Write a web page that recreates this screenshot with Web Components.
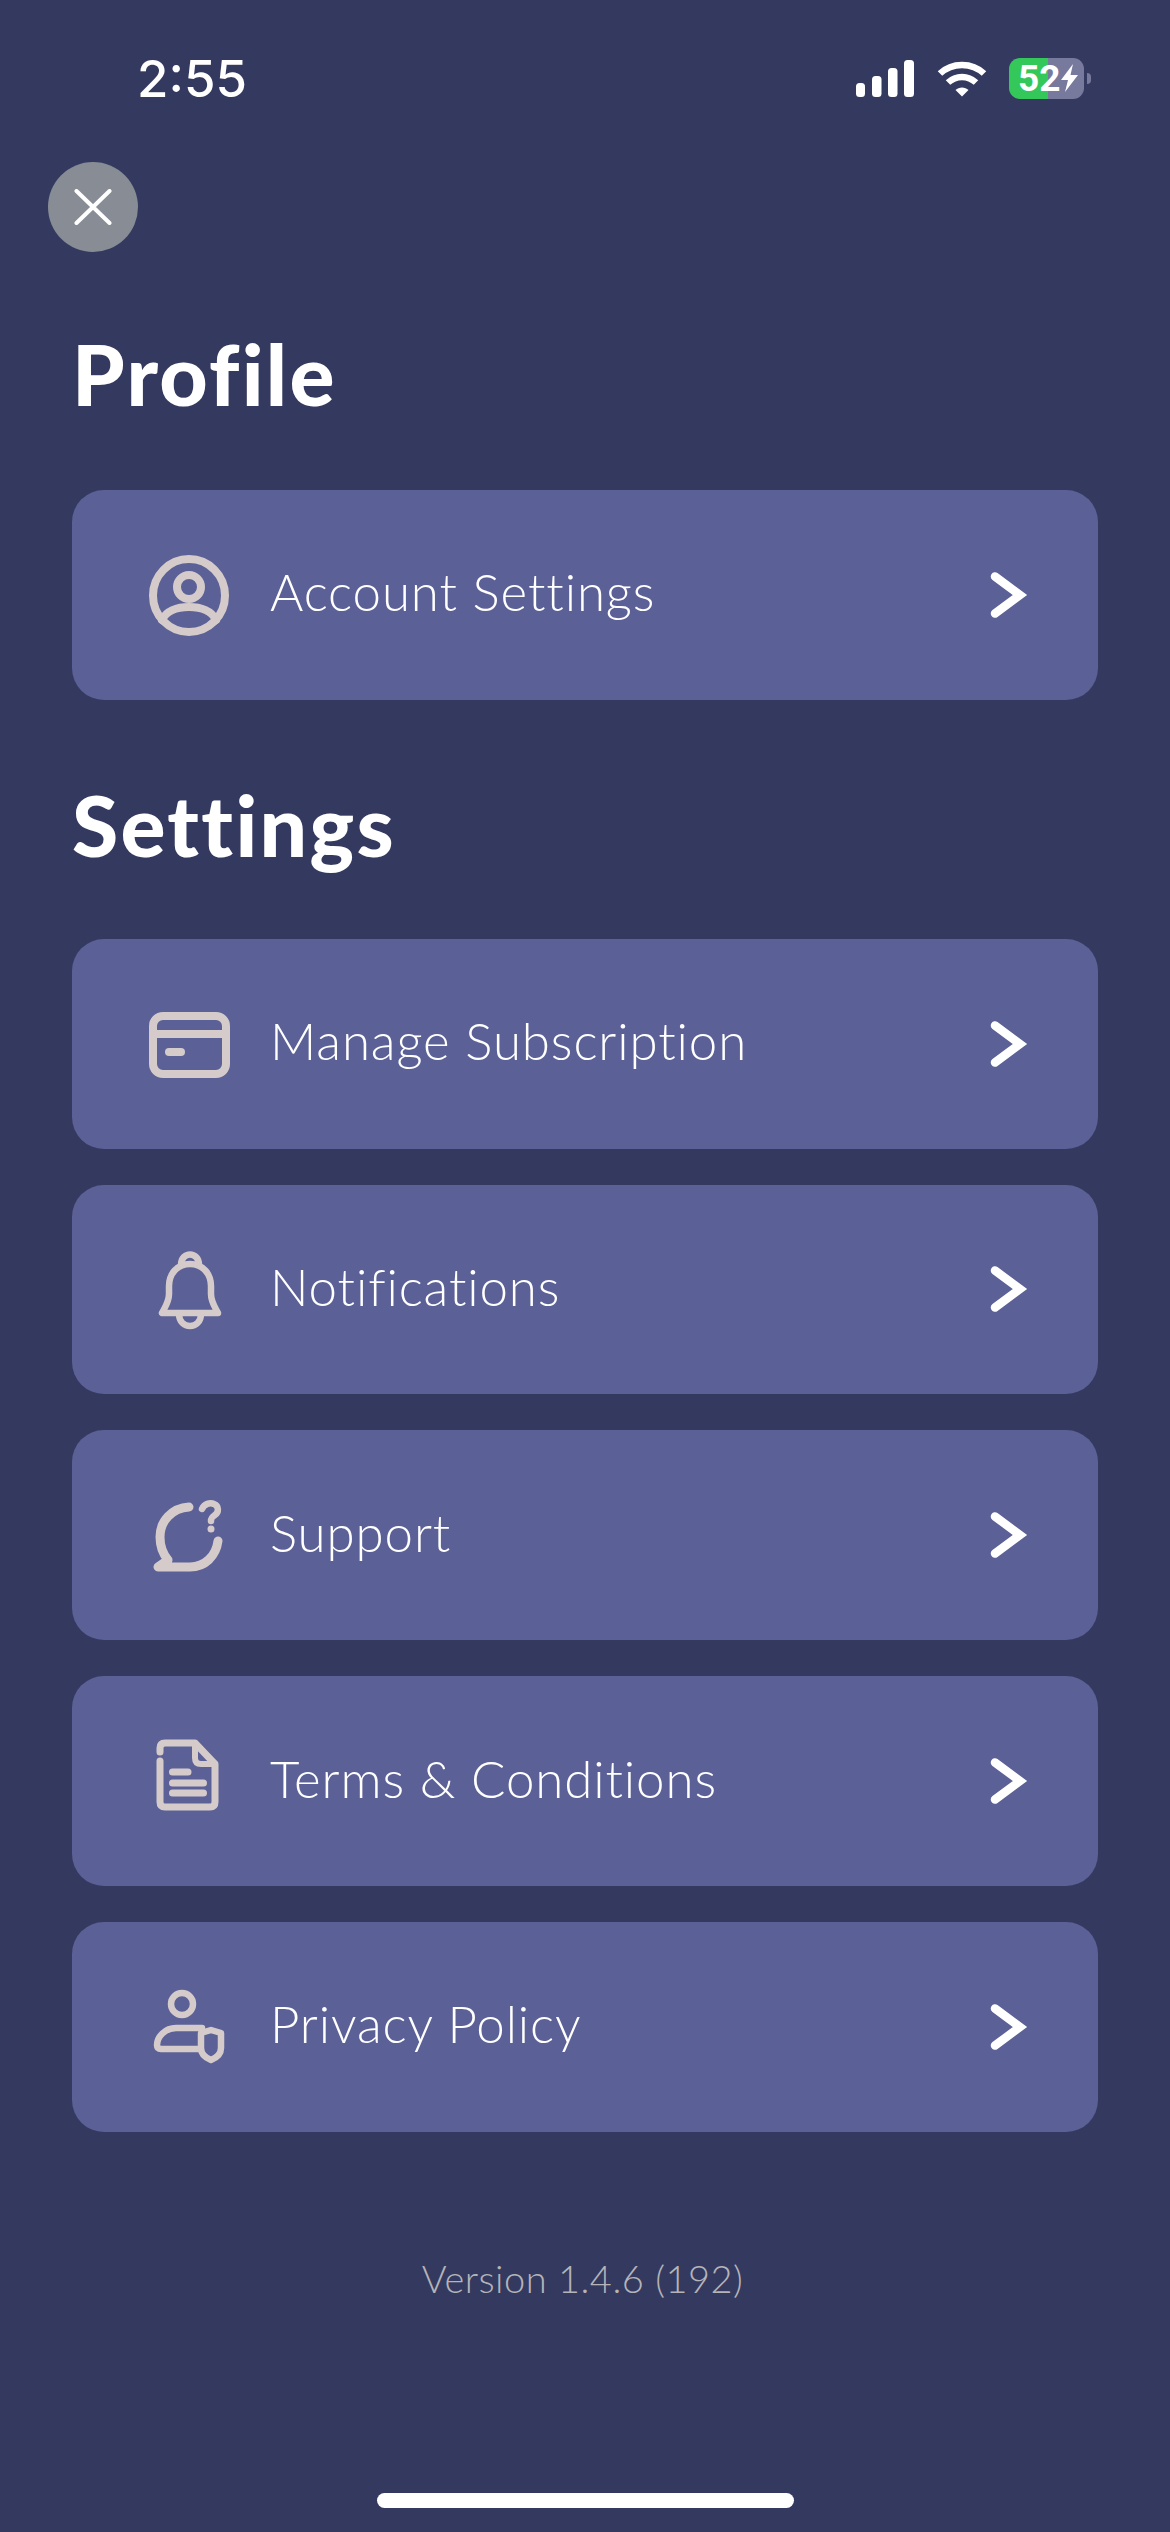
<!DOCTYPE html>
<html>
<head>
<meta charset="utf-8">
<title>Settings</title>
<style>
  html, body { margin: 0; background: #343a5f; }
  .settings-heading { --heading-height: 239px; --heading-top: 75px; }
</style>
</head>
<body>
<settings-screen>
  <status-bar time="2:55" level="52"></status-bar>
  <close-button></close-button>
  <section-heading>Profile</section-heading>
  <settings-row icon="account">Account Settings</settings-row>
  <section-heading class="settings-heading">Settings</section-heading>
  <div class="rows">
    <settings-row icon="card">Manage Subscription</settings-row>
    <settings-row icon="bell">Notifications</settings-row>
    <settings-row icon="support">Support</settings-row>
    <settings-row icon="doc">Terms &amp; Conditions</settings-row>
    <settings-row icon="privacy">Privacy Policy</settings-row>
  </div>
  <version-label>Version 1.4.6 (192)</version-label>
  <home-bar></home-bar>
</settings-screen>

<script>
class SettingsScreen extends HTMLElement {
  constructor() {
    super();
    this.shadowDOM = this.attachShadow({mode: "open"});
    this.shadowDOM.innerHTML = `
    <style>
      :host {
        display: flex;
        flex-direction: column;
        width: 1170px;
        height: 2532px;
        overflow: hidden;
        background: #343a5f;
      }
      ::slotted(.rows) {
        display: flex;
        flex-direction: column;
        gap: 36px;
      }
    </style>
    <slot></slot>
    `;
  }
}

class StatusBar extends HTMLElement {
  constructor() {
    super();
    this.shadowDOM = this.attachShadow({mode: "open"});
  }

  connectedCallback() {
    this.shadowDOM.innerHTML = `
    <style>
      :host {
        display: flex;
        align-items: center;
        justify-content: space-between;
        height: 156px;
        padding: 0 79px 0 137px;
        box-sizing: border-box;
        color: #fff;
        font-family: Inter, "Liberation Sans", sans-serif;
      }
      .time { font-size: 51px; font-weight: 500; }
      .icons { display: flex; align-items: center; }
      svg { display: block; }
      .wifi { margin-left: 23px; }
      .battery {
        display: flex;
        align-items: center;
        justify-content: space-between;
        width: 75px;
        height: 41px;
        margin-left: 22px;
        padding: 0 6px 0 9px;
        box-sizing: border-box;
        border-radius: 11px;
        background: linear-gradient(90deg, #34c759 0 39px, #777a9c 39px);
        font: 700 37px/41px Roboto, sans-serif;
      }
      .nub { width: 4px; height: 11px; margin-left: 3px; border-radius: 0 6px 6px 0; background: #777a9c; }
    </style>
    <span class="time">${this.getAttribute("time")}</span>
    <div class="icons">
      <svg width="58" height="37" viewBox="0 0 58 37" fill="#fff">
        <rect x="0" y="23" width="9" height="14" rx="3.5"/>
        <rect x="16" y="16" width="9.5" height="21" rx="3.5"/>
        <rect x="32" y="8" width="9.5" height="29" rx="3.5"/>
        <rect x="48" y="0" width="10" height="37" rx="3.5"/>
      </svg>
      <svg class="wifi" width="50" height="37" viewBox="0 0 50 37" fill="none" stroke="#fff" stroke-width="6.5">
        <path d="M3 13.5 C15 2 35 2 47 13.5"/>
        <path d="M11 22.5 C19 15 31 15 39 22.5"/>
        <path d="M18.5 30 L25 36.5 L31.5 30 C28 26.5 22 26.5 18.5 30Z" fill="#fff" stroke="none"/>
      </svg>
      <div class="battery">
        <span>${this.getAttribute("level")}</span>
        <svg width="17" height="28" viewBox="0 0 17 28" fill="#fff"><path d="M12 0 L0 16 H7 L4 28 L17 11 H9.5Z"/></svg>
      </div>
      <div class="nub"></div>
    </div>
    `;
  }
}

class CloseButton extends HTMLElement {
  constructor() {
    super();
    this.shadowDOM = this.attachShadow({mode: "open"});
    this.shadowDOM.innerHTML = `
    <style>
      :host {
        display: flex;
        align-items: center;
        justify-content: center;
        width: 90px;
        height: 90px;
        margin: 6px 0 0 48px;
        border-radius: 50%;
        background: #878c95;
      }
    </style>
    <svg width="38" height="36" viewBox="0 0 38 36" fill="none" stroke="#fff" stroke-width="4" stroke-linecap="round">
      <path d="M2.5 2 L35.5 34 M35.5 2 L2.5 34"/>
    </svg>
    `;
  }
}

class SectionHeading extends HTMLElement {
  constructor() {
    super();
    this.shadowDOM = this.attachShadow({mode: "open"});
    this.shadowDOM.innerHTML = `
    <style>
      :host {
        display: block;
        height: var(--heading-height, 238px);
        padding: var(--heading-top, 72px) 0 0 72px;
        box-sizing: border-box;
        color: #fff;
        font: 900 84px/100px Lato, "Open Sans", sans-serif;
        font-variant-ligatures: none;
        letter-spacing: 2.3px;
      }
    </style>
    <slot></slot>
    `;
  }
}

const ICONS = {
  account: `
    <ellipse cx="45" cy="45.5" rx="36" ry="36.5"/>
    <circle cx="45" cy="37" r="12"/>
    <path d="M18 70 C22 61 33 57 45 57 C57 57 68 61 72 70"/>`,
  card: `
    <rect x="9" y="17" width="73" height="58" rx="10"/>
    <path d="M9 35 H82"/>
    <path d="M25 53 H37"/>`,
  bell: `
    <g stroke-width="6.5">
      <path d="M46 20 C33 20 25 30 25 42 V50 C25 58 21 63 18 69 H74 C71 63 67 58 67 50 V42 C67 30 59 20 46 20Z"/>
      <path d="M37 21 C37 7 55 7 55 21"/>
      <path d="M35 70 C35 86 57 86 57 70"/>
    </g>`,
  support: `
    <path stroke-width="9" d="M45 17 C28 18 16 31 16 47 C16 56 19 64 24 70 L14 77 H46 C61 77 72 66 74 51"/>
    <path stroke-width="6.5" d="M58 19 C60 14 66 12 70 14 C75 16 75 22 71 25 C68 27 67 28 67 31"/>
    <circle cx="67" cy="39" r="3.5" fill="#d5cbcb" stroke="none"/>`,
  doc: `
    <g stroke-width="7">
      <path d="M16 16 V12 Q16 7 21 7 H51 L71 28 V66 Q71 71 66 71 H21 Q16 71 16 66 V25"/>
      <path stroke-width="6" d="M51 7 V22 Q51 28 57 28 H71"/>
      <path d="M28.5 36 H44 M28.5 47 H59.5 M28.5 57 H59.5"/>
    </g>`,
  privacy: `
    <g stroke-width="6.5">
      <circle cx="38" cy="22" r="11"/>
      <path d="M58 46 H32 C21 46 13 55 13 63 Q13 67 17 67 H54"/>
      <path d="M67 48 L77 51 V66 C77 73 72 76 67 78 C62 76 57 73 57 66 V51Z"/>
    </g>`
};

class SettingsRow extends HTMLElement {
  constructor() {
    super();
    this.shadowDOM = this.attachShadow({mode: "open"});
  }

  connectedCallback() {
    this.shadowDOM.innerHTML = `
    <style>
      :host {
        display: flex;
        align-items: center;
        gap: 36px;
        height: 209.8px;
        margin: 0 72px;
        padding: 0 70px 0 72px;
        box-sizing: border-box;
        border-radius: 32px;
        background: #5b6096;
        color: #fff;
        font: 300 51px/60px Lato, "Open Sans", sans-serif;
        font-variant-ligatures: none;
        letter-spacing: 0.9px;
      }
      svg { display: block; flex: none; }
      .label { flex: 1; padding-bottom: 5px; }
    </style>
    <svg width="90" height="90" viewBox="0 0 90 90" fill="none" stroke="#d5cbcb" stroke-width="8" stroke-linecap="round" stroke-linejoin="round">
      ${ICONS[this.getAttribute("icon")]}
    </svg>
    <div class="label"><slot></slot></div>
    <svg width="40" height="50" viewBox="0 0 40 50" fill="none" stroke="#fff" stroke-width="8.5" stroke-linecap="round" stroke-linejoin="miter">
      <path d="M7 6.5 L32 25 L7 43.5"/>
    </svg>
    `;
  }
}

class VersionLabel extends HTMLElement {
  constructor() {
    super();
    this.shadowDOM = this.attachShadow({mode: "open"});
    this.shadowDOM.innerHTML = `
    <style>
      :host {
        display: block;
        margin-top: 123px;
        padding-right: 5px;
        text-align: center;
        color: #b4b4b9;
        font: 300 38px/46px Lato, "Open Sans", sans-serif;
        letter-spacing: 0.5px;
      }
    </style>
    <slot></slot>
    `;
  }
}

class HomeBar extends HTMLElement {
  constructor() {
    super();
    this.shadowDOM = this.attachShadow({mode: "open"});
    this.shadowDOM.innerHTML = `
    <style>
      :host {
        display: block;
        width: 417px;
        height: 15px;
        margin: auto 0 24px 377px;
        border-radius: 8px;
        background: #fff;
      }
    </style>
    `;
  }
}

customElements.define("settings-screen", SettingsScreen);
customElements.define("status-bar", StatusBar);
customElements.define("close-button", CloseButton);
customElements.define("section-heading", SectionHeading);
customElements.define("settings-row", SettingsRow);
customElements.define("version-label", VersionLabel);
customElements.define("home-bar", HomeBar);
</script>
</body>
</html>
